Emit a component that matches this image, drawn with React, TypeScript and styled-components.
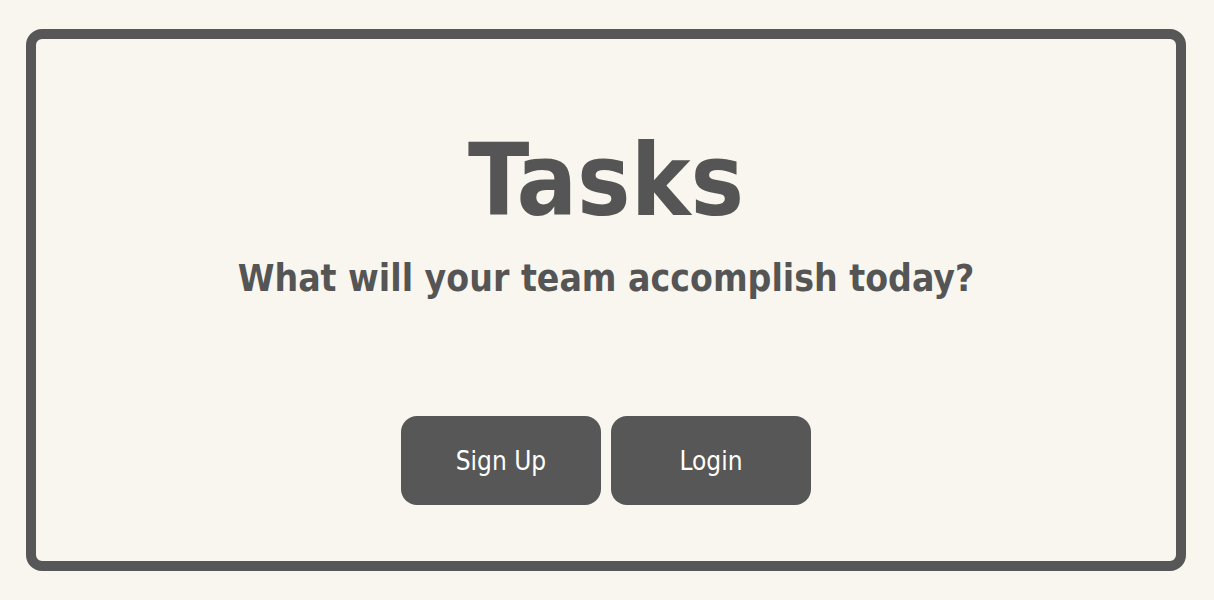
import React from 'react';
import styled, { createGlobalStyle } from 'styled-components';

const GlobalStyle = createGlobalStyle`
  html, body {
    margin: 0;
    padding: 0;
    background: #f9f6f0;
  }
  body {
    font-family: "DejaVu Sans Condensed", "DejaVu Sans", sans-serif;
    font-stretch: condensed;
  }
`;

const Page = styled.div`
  padding: 29px 28px 29px 26px;
`;

const Frame = styled.div`
  box-sizing: border-box;
  height: 542px;
  border: 10px solid #575757;
  border-radius: 16px;
  display: flex;
  flex-direction: column;
  align-items: center;
  padding-top: 92px;
  color: #555555;
`;

const Title = styled.h1`
  margin: 0;
  font-size: 100px;
  line-height: 1;
  font-weight: bold;
`;

const Subtitle = styled.h2`
  margin: 29px 0 0;
  font-size: 37px;
  line-height: 1;
  font-weight: bold;
`;

const Actions = styled.div`
  display: flex;
  gap: 10px;
  margin-top: 119px;
`;

const Button = styled.button`
  width: 200px;
  height: 89px;
  border: none;
  border-radius: 16px;
  background: #575757;
  color: #ffffff;
  font-family: inherit;
  font-stretch: condensed;
  font-size: 26px;
  cursor: pointer;
`;

export default function App() {
  return (
    <>
      <GlobalStyle />
      <Page>
        <Frame>
          <Title>Tasks</Title>
          <Subtitle>What will your team accomplish today?</Subtitle>
          <Actions>
            <Button>Sign Up</Button>
            <Button>Login</Button>
          </Actions>
        </Frame>
      </Page>
    </>
  );
}
